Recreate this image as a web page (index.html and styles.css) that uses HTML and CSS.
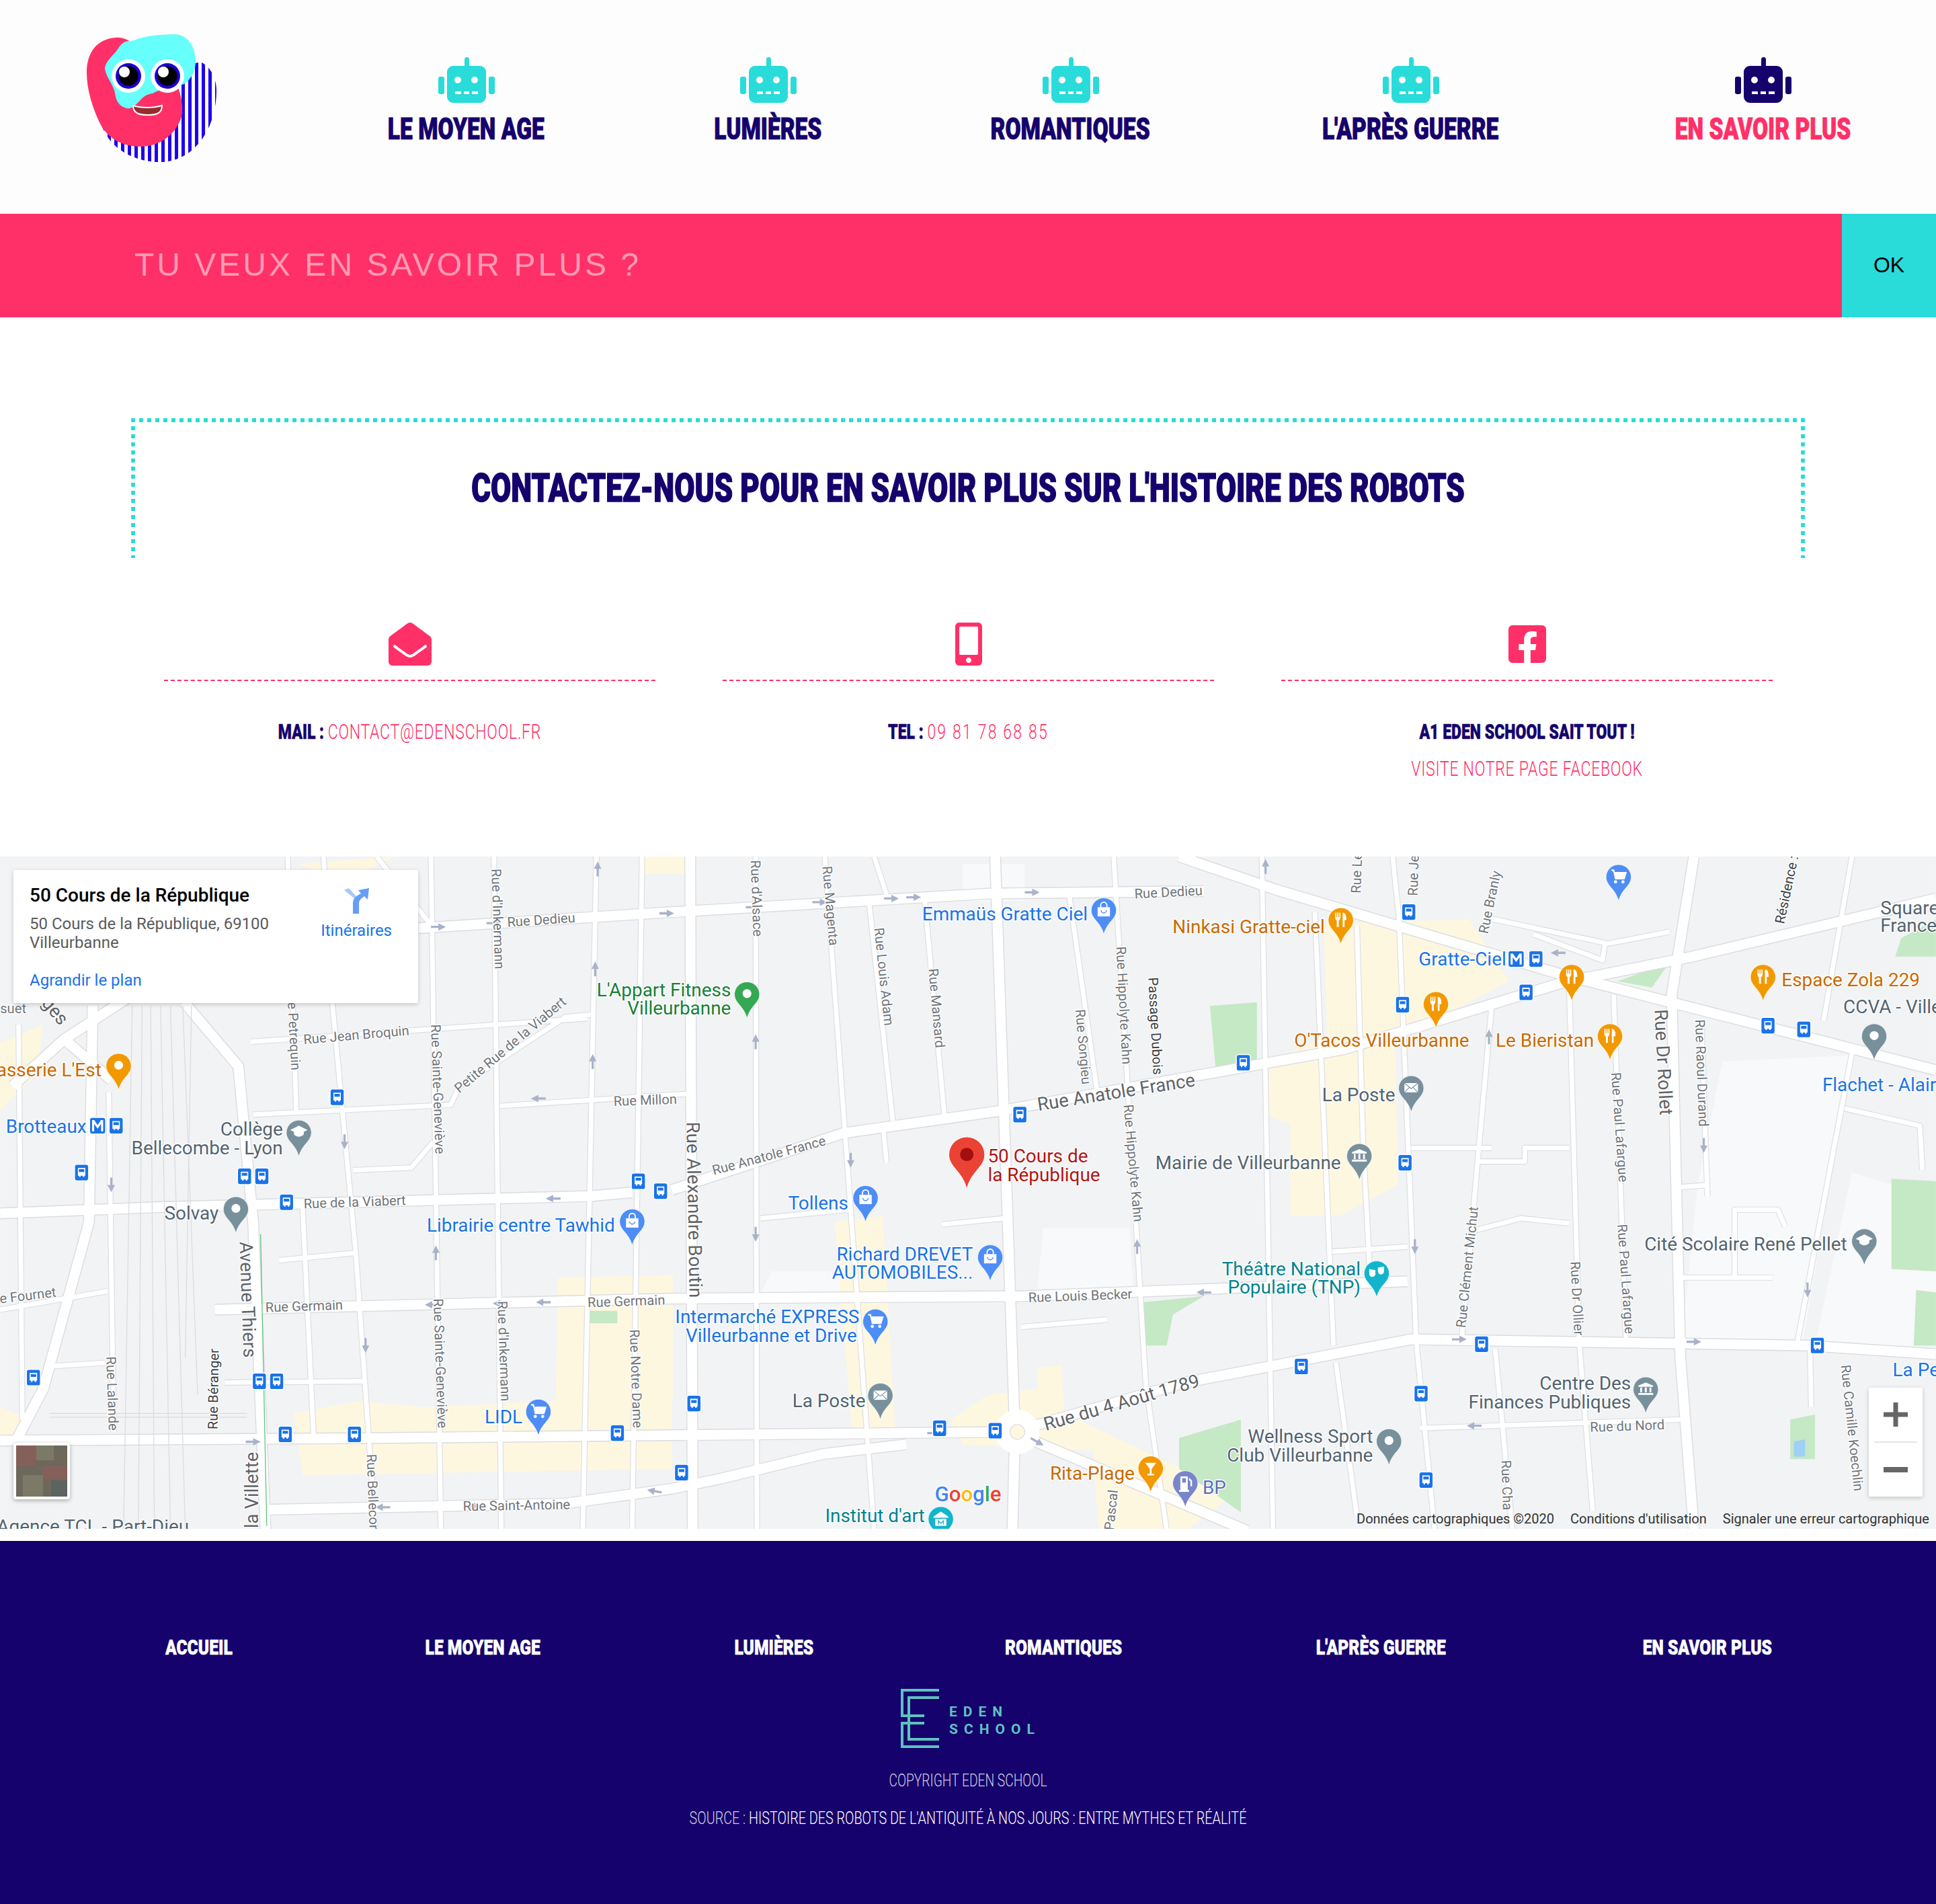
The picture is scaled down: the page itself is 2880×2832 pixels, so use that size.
FILE: index.html
```html
<!DOCTYPE html>
<html lang="fr">
<head>
  <meta charset="UTF-8" />
  <title>En savoir plus - Histoire des robots</title>
  <link rel="stylesheet" href="styles.css">
</head>
<body>
  <svg class="sprites" width="0" height="0">
    <defs>
      <g id="robot">
        <rect x="39" y="0" width="7" height="16" rx="3.5"/>
        <rect x="0" y="29" width="9" height="26" rx="3"/>
        <rect x="75" y="29" width="9" height="26" rx="3"/>
        <path fill-rule="evenodd" d="M22 13h40a9 9 0 0 1 9 9v37a9 9 0 0 1-9 9H22a9 9 0 0 1-9-9V22a9 9 0 0 1 9-9zM29 29a5 5 0 1 0 0 10 5 5 0 0 0 0-10zM54 29a5 5 0 1 0 0 10 5 5 0 0 0 0-10zM25 51v4h9v-4zM38 51v4h8v-4zM50 51v4h9v-4z"/>
      </g>
    </defs>
  </svg>

  <header class="site-header">
    <svg class="logo" viewBox="128 50 197 193" width="197" height="193">
      <defs>
        <clipPath id="logo-head"><path d="M147 165C150 215 195 241 237 241 290 241 322 190 322 135 322 115 312 98 298 92L200 120z"/></clipPath>
        <pattern id="logo-stripes" width="10" height="10" patternUnits="userSpaceOnUse"><rect width="5" height="10" fill="#1d00f0"/></pattern>
      </defs>
      <rect x="128" y="50" width="197" height="193" fill="url(#logo-stripes)" clip-path="url(#logo-head)"/>
      <path d="M172 56c-28 2-43 22-43 52 0 24 8 50 18 72 12 26 34 38 63 38 36 0 60-30 61-52 1-12-2-24-6-36l-60-60-14-10c-6-3-13-5-19-4z" fill="#ff3068"/>
      <path d="M204 58c18-6 42-7 57-7 18 1 30 18 30 40 0 16-8 28-17 34-14 4-33 6-47 14-12 8-18 22-32 23-12-1-22-6-24-24-3-14-13-22-15-36 1-12 12-18 20-30 10-16 18-8 28-14z" fill="#66fffb"/>
      <path d="M265 140c6 12 6 24 6 30l-50 4-33-12c14-1 20-15 29-20 14-8 32 2 48-2z" fill="#ff3068"/>
      <circle cx="191" cy="113" r="25" fill="#fff"/><circle cx="249" cy="113" r="25" fill="#fff"/>
      <circle cx="191" cy="113" r="19" fill="#1d00d0"/><circle cx="249" cy="113" r="19" fill="#1d00d0"/>
      <circle cx="191" cy="113" r="14.5" fill="#000"/><circle cx="249" cy="113" r="14.5" fill="#000"/>
      <circle cx="185" cy="107" r="8" fill="#fff"/><circle cx="243" cy="107" r="8" fill="#fff"/>
      <path d="M198 157c12 4 30 4 43 0 0 12-9 14-21 14s-22-2-22-14z" fill="#952d2d" stroke="#fff" stroke-width="2"/>
    </svg>
    <nav class="main-nav">
      <a class="nav-item"><svg class="robot" viewBox="0 0 84 68"><use href="#robot"/></svg><span class="nav-label"><b>LE MOYEN AGE</b></span></a>
      <a class="nav-item"><svg class="robot" viewBox="0 0 84 68"><use href="#robot"/></svg><span class="nav-label"><b>LUMIÈRES</b></span></a>
      <a class="nav-item"><svg class="robot" viewBox="0 0 84 68"><use href="#robot"/></svg><span class="nav-label"><b>ROMANTIQUES</b></span></a>
      <a class="nav-item"><svg class="robot" viewBox="0 0 84 68"><use href="#robot"/></svg><span class="nav-label"><b>L'APRÈS GUERRE</b></span></a>
      <a class="nav-item active"><svg class="robot" viewBox="0 0 84 68"><use href="#robot"/></svg><span class="nav-label"><b>EN SAVOIR PLUS</b></span></a>
    </nav>
  </header>

  <form class="search-bar">
    <div class="search-text">TU VEUX EN SAVOIR PLUS ?</div>
    <div class="search-ok">OK</div>
  </form>

  <main class="content">
    <div class="title-box">
      <h1>CONTACTEZ-NOUS POUR EN SAVOIR PLUS SUR L'HISTOIRE DES ROBOTS</h1>
    </div>

    <div class="contact-grid">
      <div class="contact-col">
        <div class="contact-icon">
          <svg width="64" height="64" viewBox="0 0 512 512"><path d="M512 464c0 26.51-21.49 48-48 48H48c-26.51 0-48-21.49-48-48V200.724a48 48 0 0 1 18.387-37.776c24.913-19.529 45.501-35.365 164.2-121.511C199.412 29.17 232.797-.347 256 .003c23.198-.354 56.596 29.167 73.413 41.433 118.687 86.137 139.303 101.995 164.2 121.512A48 48 0 0 1 512 200.724V464zm-65.666-196.605c-2.563-3.728-7.7-4.595-11.339-1.907-22.845 16.873-55.462 40.705-105.582 77.079-16.825 12.266-50.21 41.781-73.413 41.43-23.211.344-56.559-29.143-73.413-41.43-50.114-36.37-82.734-60.204-105.582-77.079-3.639-2.688-8.776-1.821-11.339 1.907l-9.072 13.196a7.998 7.998 0 0 0 1.839 10.967c22.887 16.899 55.454 40.69 105.303 76.868 20.274 14.781 56.524 47.813 92.264 47.573 35.724.242 71.961-32.771 92.263-47.573 49.85-36.179 82.418-59.97 105.303-76.868a7.998 7.998 0 0 0 1.839-10.967l-9.071-13.196z"/></svg>
        </div>
        <p class="contact-line"><strong>MAIL : </strong><span>CONTACT@EDENSCHOOL.FR</span></p>
      </div>
      <div class="contact-col">
        <div class="contact-icon">
          <svg width="40" height="64" viewBox="0 0 320 512"><path d="M272 0H48C21.5 0 0 21.5 0 48v416c0 26.5 21.5 48 48 48h224c26.5 0 48-21.5 48-48V48c0-26.5-21.5-48-48-48zM160 480c-17.7 0-32-14.3-32-32s14.3-32 32-32 32 14.3 32 32-14.3 32-32 32zm112-108c0 6.6-5.4 12-12 12H60c-6.6 0-12-5.4-12-12V60c0-6.6 5.4-12 12-12h200c6.6 0 12 5.4 12 12v312z"/></svg>
        </div>
        <p class="contact-line"><strong>TEL : </strong><span class="phone">09 81 78 68 85</span></p>
      </div>
      <div class="contact-col">
        <div class="contact-icon">
          <svg width="56" height="64" viewBox="0 0 448 512"><path d="M400 32H48A48 48 0 0 0 0 80v352a48 48 0 0 0 48 48h137.25V327.69h-63V256h63v-54.64c0-62.15 37-96.48 93.67-96.48 27.14 0 55.52 4.84 55.52 4.84v61h-31.27c-30.81 0-40.42 19.12-40.42 38.73V256h68.78l-11 71.69h-57.78V480H400a48 48 0 0 0 48-48V80a48 48 0 0 0-48-48z"/></svg>
        </div>
        <p class="contact-line"><strong>A1 EDEN SCHOOL SAIT TOUT !</strong></p>
        <p class="contact-line"><span>VISITE NOTRE PAGE FACEBOOK</span></p>
      </div>
    </div>
  </main>

  <section class="map">
    <svg class="map-canvas" viewBox="0 694 1568 544.5" width="2880" height="1000">
      <defs>
        <path id="pin" d="M0-10.5a10.2 10.2 0 0 1 10.2 10.2c0 7-7.500 9-10.200 19.300C-2.700 8.700-10.200 6.700-10.200-.3A10.200 10.200 0 0 1 0-10.500z" stroke="#fff" stroke-width=".4"/>
        <g id="pin-dot"><use href="#pin"/><circle cy="-1" r="3.600" fill="#fff"/></g>
        <g id="pin-bag"><use href="#pin"/><path d="M-5-3h10v7.500h-10z" fill="#fff"/><path d="M-2.500-3v-1.500a2.500 2.500 0 0 1 5 0V-3" fill="none" stroke="#fff"/><path d="M-2.200-.500a2.200 2.200 0 0 0 4.400 0" fill="none" stroke="#4e8df5" stroke-width=".8"/></g>
        <g id="pin-cart"><use href="#pin"/><path d="M-6-6h2l1.500 7h7l1.500-5h-9.500" fill="#fff" stroke="#fff"/><circle cx="-2.500" cy="3.500" r="1.300" fill="#fff"/><circle cx="3.500" cy="3.500" r="1.300" fill="#fff"/></g>
        <g id="pin-fork"><use href="#pin"/><path d="M-4.500-6.500h.9v3.500h.7v-3.500h.9v3.500h.7v-3.500h.9V-2a2 2 0 0 1-1.300 1.800V5h-1.600V-.2A2 2 0 0 1-4.500-2zM1.500-6.500c2.500 0 3 3 3 6H3V5H1.500z" fill="#fff"/></g>
        <g id="pin-mail"><use href="#pin"/><path d="M-5.500-4.500h11v7.500h-11z" fill="#fff"/><path d="M-5.500-4.500L0 0l5.500-4.500M-5.500 3L-1.500-1M5.500 3L1.500-1" fill="none" stroke="#78909c" stroke-width=".6"/></g>
        <g id="pin-bank"><use href="#pin"/><path d="M-6-3.500L0-6l6 2.500v1h-12zM-4.500-2h1.500v4h-1.500zM-.8-2H.8v4H-.8zM3-2h1.500v4H3zM-6 2.500H6V4H-6z" fill="#fff"/></g>
        <g id="pin-grad"><use href="#pin"/><path d="M0-6l7 3.500L0 1l-7-3.500zM-4 1c2 2.500 6 2.500 8 0V-1L0 1l-4-2z" fill="#fff"/></g>
        <g id="pin-theatre"><use href="#pin"/><path d="M-6-4l5 1v3a2.500 2.500 0 0 1-5 0zM1-5l5-1v4a2.500 2.500 0 0 1-5 0z" fill="#fff"/></g>
        <g id="pin-glass"><use href="#pin"/><path d="M-4.500-5h9L.7 0v4h2v1.200h-5.400V4h2V0z" fill="#fff"/></g>
        <g id="pin-fuel"><use href="#pin"/><path d="M-4-6h6v11h1v1.500h-8V5h1zM-2.500-4.500V-1h3v-3.500zM3-5l2.500 2.500V2H4.200v-4L3-3z" fill="#fff"/></g>
        <g id="pin-museum"><use href="#pin"/><path d="M0-6.500l6 4v1h-12v-1zM-4.500-.5h9V5h-9z" fill="#fff"/><path d="M-2 4V1l2 2 2-2v3" fill="none" stroke="#12b5cb" stroke-width=".7"/></g>
        <g id="bus">
          <rect x="-5.700" y="-6.700" width="11.400" height="13.400" rx="2" fill="#1a73e8" stroke="#fff" stroke-width=".8"/>
          <path d="M-3-3.800h6v6.300h-.8v1h-1.200v-1h-1.800v1H-2v-1h-1zM-2.200-2.800V-.5h4.400v-2.300z" fill="#fff"/>
        </g>
        <g id="metro">
          <rect x="-6.500" y="-6.700" width="13" height="13.400" rx="2" fill="#1a73e8" stroke="#fff" stroke-width=".8"/>
          <path d="M-4.500 4.500v-9h1.800L0-.5l2.700-4h1.800v9H2.800v-6L0 2.500l-2.800-4v6z" fill="#fff"/>
        </g>
        <path id="ar" d="M0-6L3 0H.9v6H-.9V0H-3z" fill="#aab2c9"/>
        <g id="roads-major">
          <path d="M544 964L683 918 810 900 1089 850 1266 796"/>
          <path d="M174 1061L544 1052 830 1050 1140 1038"/>
          <path d="M0 1167L300 1165 820 1160 960 1120 1143 1085 1463 1090 1568 1097"/>
          <path d="M820 1160L1010 1240"/>
          <path d="M955 694L1034 721 1263 789 1568 867"/>
          <path d="M1266 796L1371 775 1568 728"/>
          <path d="M559 694L561 1240"/>
          <path d="M806 694L822 1160 820 1240"/>
          <path d="M1372 694L1354 806 1361 1100 1372 1240"/>
          <path d="M339 752L544 739 801 724 975 722"/>
          <path d="M0 983L128 978 479 969 512 966"/>
          <path d="M149 812L193 864 205 991 215 1240"/>
          <path d="M75 815L72 990 35 1125 14 1165"/>
          <path d="M215 1223L458 1218 544 1206 583 1198 666 1178 734 1170"/>
          <path d="M10 880L52 842 104 808M52 842L90 875"/>
        </g>
        <g id="roads-minor">
          <path d="M233 694L240 903M245 978L254 1165M262 694L269 812 288 1014 304 1240M349 694L357 1240M400 694L406 1240M483 694L472 1240M520 694L512 1240"/>
          <path d="M612 694L613 1240M668 694L708 1240M708 694L718 725M704 732L723 908M749 730L765 905M866 725L889 887"/>
          <path d="M902 694L928 1121 945 1240M1022 694L1031 1240M1065 739L1080 1090M1128 694L1133 743 1147 1086 1162 1240M1099 750L1104 927 1110 1040"/>
          <path d="M1208 817L1184 1083M1271 799L1279 1086 1290 1224M1307 806L1317 1086M1378 830L1383 969M1500 853L1456 1086M1500 694L1477 827"/>
          <path d="M1211 1093L1225 1240M1082 1104L1099 1228M1466 1090L1467 1140M305 694L351 752"/>
          <path d="M203 844L476 825M205 903L365 895 372 880 458 824 480 822M405 896L560 886M286 948L333 946 351 925M226 1021L288 1015"/>
          <path d="M616 987L687 980M763 992L813 987M827 1075L897 1069M715 910L718 942"/>
          <path d="M1143 930L1208 930M1198 941L1235 941 1235 930 1271 930M1194 997L1232 987 1271 991M1079 1014L1140 1010"/>
          <path d="M1358 1035L1436 1035M1358 962L1383 960M1405 1035V980H1440L1446 994M1494 898L1555 912 1557 948"/>
          <path d="M1150 1157L1361 1150M1201 743L1300 764 1298 778 1242 757M1300 765L1352 755"/>
          <path d="M0 1061L87 1046M38 1107L85 1104M15 830L18 1150M88 885L92 1160M182 1120L295 1119"/>
        </g>
      </defs>

      <rect class="map-bg" x="0" y="694" width="1568" height="545"/>
      <g class="map-light">
        <path d="M1395 860L1500 855 1460 1088 1362 1088 1375 960zM1500 950L1568 970 1568 1090 1470 1090zM625 1030H690V1050H615zM845 995H915L918 1045H840zM780 730H830V700H780z"/>
      </g>
      <g class="map-yellow">
        <path d="M1072 748L1190 745 1200 760 1222 795 1155 830 1130 840 1132 960 1085 985 1045 985 1045 910 1028 905 1028 860 1075 840z"/>
        <path d="M238 1145L290 1135 345 1140 544 1130 544 1190 245 1195z"/>
        <path d="M452 1035L545 1033 545 1135 450 1135zM676 990L715 985 725 1160 690 1160z"/>
        <path d="M840 1108L860 1106 862 1145 1000 1210 960 1240 890 1240 885 1175 780 1170 770 1150 800 1130 840 1125z"/>
        <path d="M0 845L35 830 30 870 0 900zM0 1140L25 1150 0 1170zM240 700L320 694 280 712zM520 694H560V708H520z"/>
      </g>
      <g class="map-green">
        <path d="M980 815L1018 812 1018 860 985 870zM926 1055L975 1050 950 1065 945 1090 928 1090z"/>
        <path d="M955 1165L1005 1150 1005 1225 955 1190zM1532 955L1568 957V1030L1532 1028zM1552 1045L1568 1047V1090L1550 1090z"/>
        <path d="M1310 795L1352 780 1338 800zM1450 1150L1470 1146 1470 1182 1450 1182zM1540 760L1568 745V775L1535 775zM475 1062H500V1072H475z"/>
      </g>
      <path class="map-water" d="M1453 1168L1462 1166V1180H1453z"/>

      <use class="road-edge major" href="#roads-major"/>
      <use class="road-edge minor" href="#roads-minor"/>
      <use class="road major" href="#roads-major"/>
      <use class="road minor" href="#roads-minor"/>
      <path class="rail" d="M107 815L100 1240M115 815L112 1240M122 815L125 1240M130 815L138 1240M138 815L150 1240M148 815L160 1130M155 815L150 1100M40 1145H200M40 1148H200"/>
      <path class="tram" d="M211 1000L216 1236"/>
      <circle cx="824" cy="1160" r="18" fill="#fff"/><circle cx="824" cy="1160" r="6" fill="#fef7e0" stroke="#dadce0" stroke-width=".6"/>

      <g class="arrows">
        <use href="#ar" transform="translate(484 704)"/><use href="#ar" transform="translate(482 785)"/><use href="#ar" transform="translate(480 860)"/>
        <use href="#ar" transform="translate(540 740) rotate(90)"/><use href="#ar" transform="translate(610 735) rotate(90)"/><use href="#ar" transform="translate(664 731) rotate(90)"/>
        <use href="#ar" transform="translate(740 727) rotate(90)"/><use href="#ar" transform="translate(836 723) rotate(90)"/><use href="#ar" transform="translate(722 728) rotate(90)"/>
        <use href="#ar" transform="translate(400 748) rotate(90)"/><use href="#ar" transform="translate(355 751) rotate(90)"/>
        <use href="#ar" transform="translate(350 1057) rotate(-90)"/><use href="#ar" transform="translate(405 1056) rotate(-90)"/><use href="#ar" transform="translate(440 1055) rotate(-90)"/>
        <use href="#ar" transform="translate(612 844)"/><use href="#ar" transform="translate(612 1000) rotate(180)"/><use href="#ar" transform="translate(689 940) rotate(180)"/>
        <use href="#ar" transform="translate(1025 702)"/><use href="#ar" transform="translate(921 1010)"/><use href="#ar" transform="translate(975 1047) rotate(-90)"/>
        <use href="#ar" transform="translate(279 925) rotate(180)"/><use href="#ar" transform="translate(296 1090) rotate(180)"/><use href="#ar" transform="translate(353 1015)"/>
        <use href="#ar" transform="translate(90 960) rotate(180)"/><use href="#ar" transform="translate(436 890) rotate(-90)"/><use href="#ar" transform="translate(448 971) rotate(-90)"/>
        <use href="#ar" transform="translate(385 1220) rotate(-90)"/><use href="#ar" transform="translate(310 1221) rotate(-90)"/><use href="#ar" transform="translate(205 1168) rotate(90)"/>
        <use href="#ar" transform="translate(530 1208) rotate(-80)"/><use href="#ar" transform="translate(757 1161) rotate(90)"/><use href="#ar" transform="translate(840 1168) rotate(120)"/>
        <use href="#ar" transform="translate(1182 1085) rotate(90)"/><use href="#ar" transform="translate(1372 1087) rotate(90)"/><use href="#ar" transform="translate(1194 1155) rotate(-90)"/>
        <use href="#ar" transform="translate(1262 772) rotate(-90)"/><use href="#ar" transform="translate(1380 928) rotate(180)"/>
        <use href="#ar" transform="translate(1464 1045) rotate(180)"/><use href="#ar" transform="translate(1206 840)"/><use href="#ar" transform="translate(1146 1010) rotate(180)"/>
      </g>

      <g class="bus-stops">
        <use href="#bus" x="27" y="1116"/><use href="#bus" x="66" y="950"/><use href="#bus" x="94" y="912"/><use href="#bus" x="198" y="953"/><use href="#bus" x="212" y="953"/>
        <use href="#bus" x="232" y="974"/><use href="#bus" x="273" y="889"/><use href="#bus" x="210" y="1119"/><use href="#bus" x="224" y="1119"/><use href="#bus" x="231" y="1162"/>
        <use href="#bus" x="287" y="1162"/><use href="#bus" x="500" y="1161"/><use href="#bus" x="517" y="957"/><use href="#bus" x="535" y="965"/><use href="#bus" x="562" y="1137"/>
        <use href="#bus" x="552" y="1193"/><use href="#bus" x="761" y="1157"/><use href="#bus" x="806" y="1159"/><use href="#bus" x="826" y="903"/><use href="#bus" x="1007" y="861"/>
        <use href="#bus" x="1054" y="1107"/><use href="#bus" x="1138" y="942"/><use href="#bus" x="1141" y="739"/><use href="#bus" x="1136" y="814"/><use href="#bus" x="1236" y="804"/>
        <use href="#bus" x="1244" y="777"/><use href="#bus" x="1151" y="1129"/><use href="#bus" x="1155" y="1199"/><use href="#bus" x="1200" y="1089"/><use href="#bus" x="1432" y="831"/>
        <use href="#bus" x="1461" y="834"/><use href="#bus" x="1472" y="1090"/>
        <use href="#metro" x="79" y="912"/><use href="#metro" x="1228" y="777"/>
      </g>

      <g class="street-labels">
        <text x="411" y="751" transform="rotate(-4 411 751)">Rue Dedieu</text>
        <text x="919" y="728" transform="rotate(-3 919 728)">Rue Dedieu</text>
        <text x="246" y="846" transform="rotate(-5 246 846)">Rue Jean Broquin</text>
        <text x="372" y="886" transform="rotate(-40 372 886)">Petite Rue de la Viabert</text>
        <text x="497" y="896" transform="rotate(-2 497 896)">Rue Millon</text>
        <text x="246" y="979" transform="rotate(-2 246 979)">Rue de la Viabert</text>
        <text x="215" y="1063" transform="rotate(-2 215 1063)">Rue Germain</text>
        <text x="476" y="1059" transform="rotate(-2 476 1059)">Rue Germain</text>
        <text x="375" y="1224" transform="rotate(-1 375 1224)">Rue Saint-Antoine</text>
        <text x="0" y="1056" transform="rotate(-7 0 1056)">e Fournet</text>
        <text x="833" y="1055" transform="rotate(-2 833 1055)">Rue Louis Becker</text>
        <text x="1288" y="1160" transform="rotate(-2 1288 1160)">Rue du Nord</text>
        <text x="578" y="952" transform="rotate(-15 578 952)">Rue Anatole France</text>
        <text x="398" y="704" transform="rotate(88 398 704)">Rue d'Inkermann</text>
        <text x="349" y="830" transform="rotate(88 349 830)">Rue Sainte-Geneviève</text>
        <text x="351" y="1052" transform="rotate(88 351 1052)">Rue Sainte-Geneviève</text>
        <text x="403" y="1054" transform="rotate(88 403 1054)">Rue d'Inkermann</text>
        <text x="510" y="1077" transform="rotate(88 510 1077)">Rue Notre Dame</text>
        <text x="608" y="697" transform="rotate(88 608 697)">Rue d'Alsace</text>
        <text x="666" y="702" transform="rotate(85 666 702)">Rue Magenta</text>
        <text x="708" y="752" transform="rotate(84 708 752)">Rue Louis Adam</text>
        <text x="752" y="785" transform="rotate(85 752 785)">Rue Mansard</text>
        <text x="871" y="818" transform="rotate(85 871 818)">Rue Songieu</text>
        <text x="904" y="767" transform="rotate(87 904 767)">Rue Hippolyte Kahn</text>
        <text x="910" y="895" transform="rotate(85 910 895)">Rue Hippolyte Kahn</text>
        <text class="dark" x="930" y="792" transform="rotate(87 930 792)">Passage Dubois</text>
        <text x="233" y="812" transform="rotate(87 233 812)">e Petrequin</text>
        <text x="86" y="1099" transform="rotate(88 86 1099)">Rue Lalande</text>
        <text class="dark" x="176" y="1158" transform="rotate(-89 176 1158)">Rue Béranger</text>
        <text x="297" y="1178" transform="rotate(88 297 1178)">Rue Bellecor</text>
        <text x="1102" y="724" transform="rotate(-88 1102 724)">Rue Lé</text>
        <text x="1148" y="726" transform="rotate(-88 1148 726)">Rue Je</text>
        <text x="1205" y="757" transform="rotate(-78 1205 757)">Rue Branly</text>
        <text class="dark" x="1445" y="749" transform="rotate(-78 1445 749)">Résidence :</text>
        <text x="1373" y="826" transform="rotate(88 1373 826)">Rue Raoul Durand</text>
        <text x="1305" y="869" transform="rotate(86 1305 869)">Rue Paul Lafargue</text>
        <text x="1310" y="992" transform="rotate(86 1310 992)">Rue Paul Lafargue</text>
        <text x="1272" y="1022" transform="rotate(87 1272 1022)">Rue Dr Ollier</text>
        <text x="1187" y="1076" transform="rotate(-84 1187 1076)">Rue Clément Michut</text>
        <text x="1491" y="1106" transform="rotate(84 1491 1106)">Rue Camille Koechlin</text>
        <text x="1216" y="1183" transform="rotate(88 1216 1183)">Rue Cha</text>
        <text x="902" y="1240" transform="rotate(-84 902 1240)">Pascal</text>
        <text x="0" y="821">suet</text>
      </g>
      <g class="street-labels big">
        <text x="841" y="900" transform="rotate(-9 841 900)">Rue Anatole France</text>
        <text x="847" y="1159" transform="rotate(-16 847 1159)">Rue du 4 Août 1789</text>
        <text x="556" y="909" transform="rotate(89 556 909)">Rue Alexandre Boutin</text>
        <text x="194" y="1006" transform="rotate(88 194 1006)">Avenue Thiers</text>
        <text x="1340" y="818" transform="rotate(87 1340 818)">Rue Dr Rollet</text>
        <text x="209" y="1238" transform="rotate(-90 209 1238)">la Villette</text>
        <text x="33" y="813" transform="rotate(50 33 813)">ges</text>
      </g>

      <use href="#pin-bag" x="894" y="738" fill="#4e8df5"/><use href="#pin-bag" x="701" y="971" fill="#4e8df5"/><use href="#pin-bag" x="802" y="1019" fill="#4e8df5"/><use href="#pin-bag" x="512" y="990" fill="#4e8df5"/>
      <use href="#pin-cart" x="709" y="1071" fill="#4e8df5"/><use href="#pin-cart" x="436" y="1144" fill="#4e8df5"/><use href="#pin-cart" x="1311" y="711" fill="#4e8df5"/>
      <use href="#pin-fork" x="1086" y="746" fill="#f29900"/><use href="#pin-fork" x="1163" y="814" fill="#f29900"/><use href="#pin-fork" x="1273" y="792" fill="#f29900"/><use href="#pin-fork" x="1304" y="840" fill="#f29900"/><use href="#pin-fork" x="1428" y="792" fill="#f29900"/>
      <use href="#pin-glass" x="932" y="1190" fill="#f29900"/><use href="#pin-dot" x="96" y="864" fill="#f29900"/><use href="#pin-dot" x="605" y="806" fill="#34a853"/>
      <use href="#pin-grad" x="242" y="918" fill="#78909c"/><use href="#pin-grad" x="1510" y="1006" fill="#78909c"/>
      <use href="#pin-dot" x="191" y="980" fill="#78909c"/><use href="#pin-dot" x="1518" y="840" fill="#78909c"/><use href="#pin-dot" x="1125" y="1168" fill="#78909c"/>
      <use href="#pin-mail" x="1143" y="882" fill="#78909c"/><use href="#pin-mail" x="713" y="1131" fill="#78909c"/>
      <use href="#pin-bank" x="1101" y="937" fill="#78909c"/><use href="#pin-bank" x="1333" y="1126" fill="#78909c"/>
      <use href="#pin-theatre" x="1115" y="1032" fill="#12b5cb"/><use href="#pin-museum" x="762" y="1231" fill="#12b5cb"/><use href="#pin-fuel" x="960" y="1202" fill="#7986cb"/>
      <g transform="translate(783 936) scale(1.430)"><use href="#pin" fill="#ea4335"/><circle cy="-.500" r="3.800" fill="#a50e0e"/></g>

      <g class="poi blue">
        <text x="881" y="746">Emmaüs Gratte Ciel</text><text x="687" y="980">Tollens</text><text x="498" y="998">Librairie centre Tawhid</text>
        <text x="788" y="1021">Richard DREVET</text><text x="788" y="1036">AUTOMOBILES...</text><text x="696" y="1072">Intermarché EXPRESS</text>
        <text x="694" y="1087">Villeurbanne et Drive</text><text x="423" y="1153">LIDL</text>
        <text x="70" y="918">Brotteaux</text><text x="1220" y="782">Gratte-Ciel</text><text class="start" x="1476" y="884">Flachet - Alair</text><text class="start" x="1533" y="1115">La Pe</text>
      </g>
      <g class="poi orange">
        <text x="82" y="872">asserie L'Est</text><text x="1073" y="756">Ninkasi Gratte-ciel</text><text x="1190" y="848">O'Tacos Villeurbanne</text>
        <text x="1291" y="848">Le Bieristan</text><text class="start" x="1443" y="799">Espace Zola 229</text><text x="919" y="1199">Rita-Plage</text>
      </g>
      <g class="poi green-text"><text x="592" y="807">L'Appart Fitness</text><text x="592" y="822">Villeurbanne</text></g>
      <g class="poi slate">
        <text x="229" y="920">Collège</text><text x="229" y="935">Bellecombe - Lyon</text><text x="177" y="988">Solvay</text><text x="1130" y="892">La Poste</text>
        <text x="701" y="1140">La Poste</text><text x="1086" y="947">Mairie de Villeurbanne</text><text class="start" x="1493" y="821">CCVA - Ville</text>
        <text class="start" x="1523" y="741">Square</text><text class="start" x="1523" y="755">France</text><text x="1496" y="1013">Cité Scolaire René Pellet</text>
        <text x="1321" y="1126">Centre Des</text><text x="1321" y="1141">Finances Publiques</text><text x="1112" y="1169">Wellness Sport</text><text x="1112" y="1184">Club Villeurbanne</text>
        <text x="153" y="1242">Agence TCL - Part-Dieu</text>
      </g>
      <g class="poi teal"><text x="1102" y="1033">Théâtre National</text><text x="1102" y="1048">Populaire (TNP)</text><text x="749" y="1233">Institut d'art</text></g>
      <g class="poi red"><text class="start" x="800" y="942">50 Cours de</text><text class="start" x="800" y="957">la République</text></g>
      <text class="poi-bp" x="974" y="1210">BP</text>
      <text class="google" x="757" y="1216"><tspan fill="#4285f4">G</tspan><tspan fill="#ea4335">o</tspan><tspan fill="#fbbc05">o</tspan><tspan fill="#4285f4">g</tspan><tspan fill="#34a853">l</tspan><tspan fill="#ea4335">e</tspan></text>
    </svg>

    <div class="map-card">
      <div class="map-card-info">
        <div class="map-card-title">50 Cours de la République</div>
        <div class="map-card-address">50 Cours de la République, 69100 Villeurbanne</div>
        <a class="map-card-link">Agrandir le plan</a>
      </div>
      <div class="map-card-route">
        <svg width="37" height="38" viewBox="0 0 37 38">
          <path d="M0 3L7 0l15 17v4z" fill="#a8c7fa"/>
          <path d="M13 38V22c0-7 6-11 12-14l-4-5L37 0l-2 17-5-5c-4 3-8 6-8 11v15z" fill="#669df6"/>
        </svg>
        <a class="map-card-link">Itinéraires</a>
      </div>
    </div>

    <div class="map-thumb"><svg width="76" height="76" viewBox="0 0 76 76">
      <rect width="76" height="76" fill="#6d675c"/>
      <path d="M0 0h30v30H0zM40 30h36v20H40z" fill="#85605a"/>
      <path d="M30 0h26v22H30zM10 44h30v32H10z" fill="#7b7a66"/>
      <path d="M52 52h24v24H52z" fill="#5c6460"/>
    </svg></div>

    <div class="map-zoom">
      <button class="zoom-btn" type="button"><svg width="36" height="36" viewBox="0 0 36 36"><path d="M14.500 0h7v14.500H36v7H21.500V36h-7V21.500H0v-7h14.500z"/></svg></button>
      <div class="zoom-sep"></div>
      <button class="zoom-btn" type="button"><svg width="36" height="8" viewBox="0 0 36 8"><path d="M0 0h36v8H0z"/></svg></button>
    </div>

    <div class="map-credits">
      <span>Données cartographiques ©2020</span>
      <span>Conditions d'utilisation</span>
      <span>Signaler une erreur cartographique</span>
    </div>
  </section>

  <footer class="site-footer">
    <nav class="footer-nav">
      <a class="footer-item"><b>ACCUEIL</b></a>
      <a class="footer-item"><b>LE MOYEN AGE</b></a>
      <a class="footer-item"><b>LUMIÈRES</b></a>
      <a class="footer-item"><b>ROMANTIQUES</b></a>
      <a class="footer-item"><b>L'APRÈS GUERRE</b></a>
      <a class="footer-item"><b>EN SAVOIR PLUS</b></a>
    </nav>
    <svg class="eden-logo" viewBox="0 0 200 88" width="200" height="88">
      <path d="M57 2H2V40H35M57 13H12V38M35 51H2V86H57M12 40V75H57" fill="none" stroke="#5ec2c0" stroke-width="4"/>
      <text class="eden-word" x="72" y="41">EDEN</text>
      <text class="eden-word" x="72" y="67">SCHOOL</text>
    </svg>
    <p class="footer-copy">COPYRIGHT EDEN SCHOOL</p>
    <p class="footer-source"><span>SOURCE : </span>HISTOIRE DES ROBOTS DE L'ANTIQUITÉ À NOS JOURS : ENTRE MYTHES ET RÉALITÉ</p>
  </footer>
</body>
</html>
```

FILE: styles.css
```css
* {
  box-sizing: border-box;
}

body {
  margin: 0;
  background: #fff;
  font-family: 'Roboto', 'Liberation Sans', sans-serif;
  color: #16026c;
}

p {
  margin: 0;
}

.sprites {
  position: absolute;
}

/* header */
.site-header {
  height: 318px;
  background: #fdfdfd;
  padding: 0 125px 26px 128px;
  display: flex;
  align-items: center;
  justify-content: space-between;
}

.logo {
  display: block;
}

.main-nav {
  display: grid;
  grid-template-columns: 227px 165px 229px 277px 265px;
  column-gap: 253px;
}

.nav-item {
  display: flex;
  flex-direction: column;
  align-items: center;
  color: #16026c;
}

.robot {
  width: 84px;
  height: 68px;
  fill: #29dcd9;
}

.nav-item.active {
  color: #ff3068;
}

.nav-item.active .robot {
  fill: #16026c;
}

.nav-label {
  display: flex;
  justify-content: center;
  width: 100%;
  margin-top: 23px;
  line-height: 32px;
  font-size: 45px;
  font-weight: 900;
  white-space: nowrap;
}

.nav-label b {
  flex-shrink: 0;
  font-weight: 900;
  -webkit-text-stroke: 1px currentColor;
  transform: scaleX(.745);
}

/* bandeau */
.search-bar {
  height: 154px;
  margin: 0;
  background: #ff3068;
  display: flex;
}

.search-text {
  flex: 1;
  padding-left: 200px;
  line-height: 152px;
  font-family: 'Liberation Sans', sans-serif;
  font-size: 48px;
  letter-spacing: 4px;
  color: #ff9ab4;
}

.search-ok {
  width: 140px;
  background: #29dcd9;
  text-align: center;
  line-height: 152px;
  font-family: 'Liberation Sans', sans-serif;
  font-size: 32px;
  color: #000;
}

/* contact */
.content {
  padding: 150px 195px 0;
}

.title-box {
  height: 208px;
  background-image:
    repeating-linear-gradient(to right, #29dcd9 0 6px, transparent 6px 12px),
    repeating-linear-gradient(to bottom, #29dcd9 0 6px, transparent 6px 12px),
    repeating-linear-gradient(to bottom, #29dcd9 0 6px, transparent 6px 12px);
  background-size: 100% 6px, 6px 100%, 6px 100%;
  background-position: top left, top left, top right;
  background-repeat: no-repeat;
  padding-top: 79px;
}

h1 {
  margin: 0;
  text-align: center;
  white-space: nowrap;
  font-size: 59px;
  line-height: 50px;
  font-weight: 900;
  -webkit-text-stroke: 1.5px currentColor;
  transform: scaleX(.745);
}

.contact-grid {
  display: grid;
  grid-template-columns: repeat(3, 731px);
  column-gap: 100px;
  margin: 96px 49px 0;
}

.contact-icon {
  height: 87px;
  border-bottom: 2px dashed #ff3068;
  text-align: center;
  fill: #ff3068;
  margin-bottom: 48px;
}

.contact-icon svg {
  display: inline-block;
}

.contact-line {
  line-height: 55px;
  height: 55px;
  font-size: 32px;
  text-align: center;
  white-space: nowrap;
  transform: scaleX(.72);
}

.contact-line strong {
  font-weight: 900;
  -webkit-text-stroke: .6px currentColor;
}

.contact-line span {
  font-weight: 300;
  letter-spacing: 1px;
  color: #ff3068;
}

.contact-line .phone {
  letter-spacing: 3px;
}

/* carte */
.map {
  position: relative;
  height: 1000px;
  margin-top: 103px;
  overflow: hidden;
}

.map-canvas {
  display: block;
}

.map-bg {
  fill: #f1f3f4;
}

.map-light {
  fill: #f8f9fa;
}

.map-yellow {
  fill: #fef7e0;
}

.map-green {
  fill: #c5e8c5;
}

.map-water {
  fill: #9fd0f5;
}

.road-edge,
.road {
  fill: none;
  stroke-linejoin: round;
}

.road-edge {
  stroke: #dadce0;
}

.road {
  stroke: #fff;
}

.road-edge.major {
  stroke-width: 9.500;
}

.road.major {
  stroke-width: 8;
}

.road-edge.minor {
  stroke-width: 5;
}

.road.minor {
  stroke-width: 3.800;
}

.rail {
  fill: none;
  stroke: #dadce0;
  stroke-width: .7;
}

.tram {
  fill: none;
  stroke: #5cc47a;
  stroke-width: .7;
}

.map-canvas text {
  font-family: 'Roboto', sans-serif;
  paint-order: stroke;
  stroke: #fff;
  stroke-width: 1.500px;
  stroke-linejoin: round;
}

.street-labels {
  font-size: 11px;
  fill: #70757a;
}

.street-labels.big {
  font-size: 15px;
  fill: #5f6368;
}

.street-labels .dark {
  fill: #3c4043;
}

.poi {
  font-size: 15.200px;
  text-anchor: end;
}

.poi .start {
  text-anchor: start;
}

.poi.blue {
  fill: #1a73e8;
}

.poi.orange {
  fill: #c96a00;
}

.poi.green-text {
  fill: #188038;
}

.poi.slate {
  fill: #536471;
}

.poi.teal {
  fill: #00838f;
}

.poi.red {
  fill: #b31412;
}

.poi-bp {
  font-size: 15.200px;
  fill: #5c6bc0;
}

.google {
  font-size: 17px;
  font-weight: 500;
}

.map-card {
  position: absolute;
  left: 20px;
  top: 20px;
  width: 602px;
  height: 198px;
  padding: 20px 39px 0 24px;
  background: #fff;
  border-radius: 2px;
  box-shadow: 0 2px 6px rgba(0, 0, 0, .2);
  display: flex;
  justify-content: space-between;
}

.map-card-info {
  width: 400px;
}

.map-card-title {
  font-size: 28px;
  line-height: 36px;
  font-weight: 500;
  color: #000;
}

.map-card-address {
  margin-top: 10px;
  font-size: 24px;
  line-height: 28px;
  color: #5b5b5b;
}

.map-card-info .map-card-link {
  display: block;
  margin-top: 28px;
}

.map-card-link {
  font-size: 24px;
  line-height: 28px;
  color: #1a73e8;
}

.map-card-route {
  display: flex;
  flex-direction: column;
  align-items: center;
  padding-top: 7px;
  gap: 11px;
}

.map-thumb {
  position: absolute;
  left: 20px;
  top: 872px;
  padding: 4px;
  background: #fff;
  border-radius: 4px;
  box-shadow: 0 2px 6px rgba(0, 0, 0, .3);
}

.map-thumb svg {
  display: block;
}

.map-zoom {
  position: absolute;
  left: 2780px;
  top: 790px;
  width: 80px;
  height: 162px;
  background: #fff;
  border-radius: 2px;
  box-shadow: 0 2px 6px rgba(0, 0, 0, .2);
}

.zoom-btn {
  display: flex;
  align-items: center;
  justify-content: center;
  width: 80px;
  height: 80px;
  padding: 0;
  border: 0;
  background: none;
  fill: #666;
}

.zoom-sep {
  height: 2px;
  margin: 0 8px;
  background: #e6e6e6;
}

.map-credits {
  position: absolute;
  left: 2018px;
  top: 973px;
  display: flex;
  gap: 24px;
  font-size: 20px;
  line-height: 24px;
  color: #333;
  white-space: nowrap;
}

/* pied de page */
.site-footer {
  height: 540px;
  margin-top: 18px;
  padding-top: 142px;
  background: #16026c;
  color: #fff;
}

.footer-nav {
  display: grid;
  grid-template-columns: 99px 164px 118px 161px 199px 189px;
  justify-content: space-between;
  padding: 0 246px;
}

.footer-item {
  display: flex;
  justify-content: center;
  line-height: 32px;
  font-size: 32px;
  white-space: nowrap;
}

.footer-item b {
  flex-shrink: 0;
  font-weight: 900;
  -webkit-text-stroke: .6px currentColor;
  transform: scaleX(.77);
}

.eden-logo {
  display: block;
  margin: 46px auto 0;
}

.eden-word {
  font-family: 'Roboto', sans-serif;
  font-size: 21px;
  font-weight: 700;
  letter-spacing: 9px;
  fill: #5ec2c0;
}

.footer-copy,
.footer-source {
  line-height: 32px;
  text-align: center;
  white-space: nowrap;
  font-weight: 300;
  font-size: 26px;
}

.footer-copy {
  margin-top: 32px;
  color: #d0cfe0;
  transform: scaleX(.74);
}

.footer-source {
  margin-top: 24px;
  transform: scaleX(.76);
}

.footer-source span {
  color: #d0cfe0;
}
```
